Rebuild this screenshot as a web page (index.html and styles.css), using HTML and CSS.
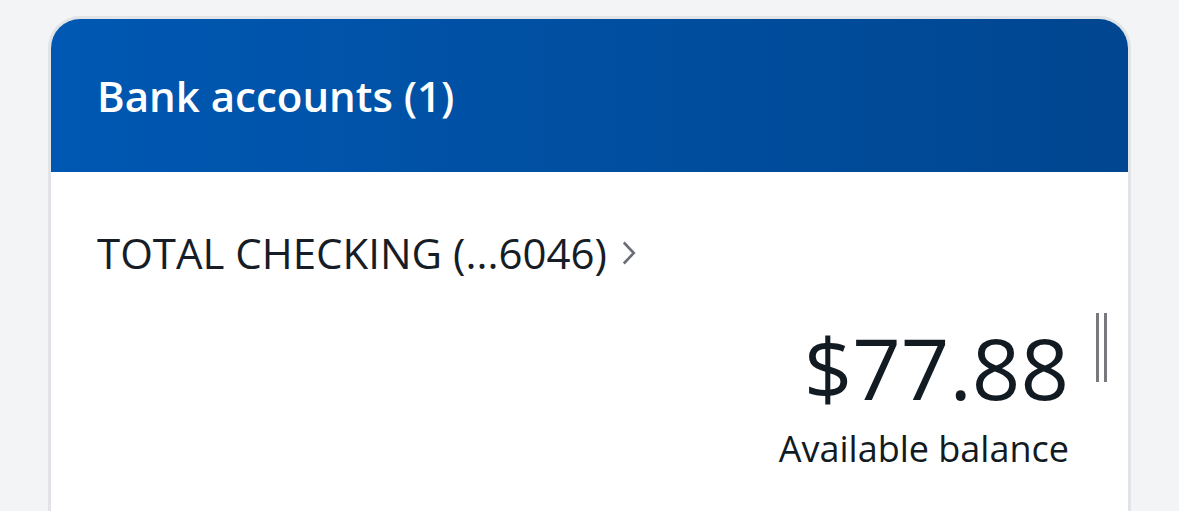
FILE: index.html
```html
<!DOCTYPE html>
<html lang="en">
<head>
  <meta charset="UTF-8">
  <title>Bank accounts</title>
  <link rel="stylesheet" href="styles.css">
</head>
<body>
  <div class="card">
    <header class="card-head">
      <h2>Bank accounts (1)</h2>
    </header>
    <div class="card-body">
      <a class="account-name" href="#">
        TOTAL CHECKING (...6046)
        <svg class="chevron" width="14" height="24" viewBox="0 0 14 24"><path d="M1.8 1.5L11.8 12 1.8 22.5" fill="none" stroke="#6b6e72" stroke-width="2.6"/></svg>
      </a>
      <div class="balance-row">
        <div class="balance">
          <div class="amount">$77.88</div>
          <div class="label">Available balance</div>
        </div>
        <div class="grip"><span></span><span></span></div>
      </div>
    </div>
  </div>
</body>
</html>
```

FILE: styles.css
```css
body {
  margin: 0;
  padding: 16px 0 0 48px;
  background: #f3f4f6;
  font-family: 'Open Sans', 'Noto Sans', sans-serif;
  color: #121a22;
  overflow: hidden;
}
.card {
  width: 1077px;
  height: 492px;
  border: 3px solid #e1e3e6;
  border-bottom: none;
  border-radius: 32px 32px 0 0;
  background: white;
  overflow: hidden;
}
.card-head {
  height: 153px;
  display: flex;
  align-items: center;
  padding-left: 46px;
  background: linear-gradient(to right, #0058b2, #004690);
}
.card-head h2 {
  margin: 0;
  color: white;
  font-size: 42px;
  font-weight: 600;
}
.card-body {
  padding: 51px 60px 0 46px;
}
.account-name {
  display: inline-flex;
  align-items: center;
  gap: 15px;
  color: #161d26;
  text-decoration: none;
  font-size: 42px;
  line-height: 60px;
}
.balance-row {
  display: flex;
  justify-content: flex-end;
  margin-top: 34px;
}
.balance {
  text-align: right;
}
.amount {
  font-size: 85px;
  line-height: 100px;
}
.label {
  margin-top: 12px;
  font-size: 36px;
  line-height: 40px;
}
.grip {
  display: flex;
  gap: 5px;
  margin: -4px -39px 0 27px;
  height: 69px;
}
.grip span {
  width: 3px;
  background: #77797d;
}
```
